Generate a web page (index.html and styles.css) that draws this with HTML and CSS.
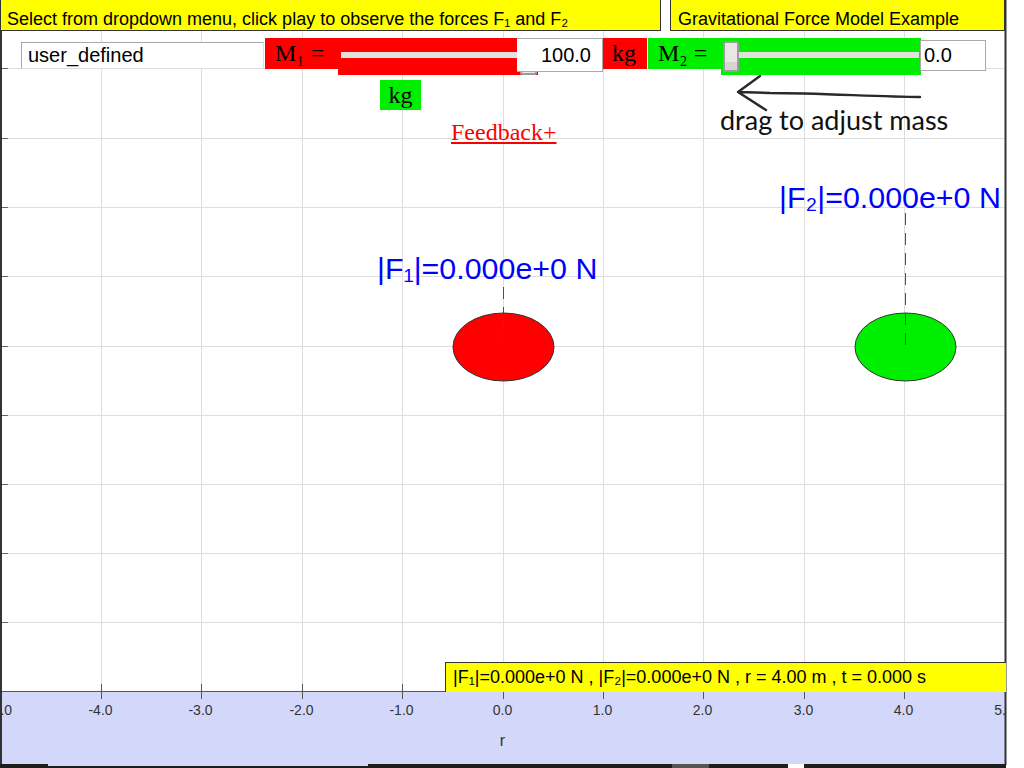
FILE: index.html
```html
<!DOCTYPE html>
<html>
<head>
<meta charset="utf-8">
<link rel="stylesheet" href="styles.css">
</head>
<body>
<div class="stage">
  <svg class="plot" width="1024" height="768" viewBox="0 0 1024 768">
    <defs>
      <clipPath id="plotclip"><rect x="0" y="0" width="1005" height="768"/></clipPath>
    </defs>
    <g class="grid">
      <line x1="101.5" y1="0" x2="101.5" y2="691"/>
      <line x1="201.5" y1="0" x2="201.5" y2="691"/>
      <line x1="302.5" y1="0" x2="302.5" y2="691"/>
      <line x1="402.5" y1="0" x2="402.5" y2="691"/>
      <line x1="503.5" y1="0" x2="503.5" y2="691"/>
      <line x1="603.5" y1="0" x2="603.5" y2="691"/>
      <line x1="703.5" y1="0" x2="703.5" y2="691"/>
      <line x1="804.5" y1="0" x2="804.5" y2="691"/>
      <line x1="904.5" y1="0" x2="904.5" y2="691"/>
      <line x1="1" y1="68.5" x2="1005" y2="68.5"/>
      <line x1="1" y1="138.5" x2="1005" y2="138.5"/>
      <line x1="1" y1="207.5" x2="1005" y2="207.5"/>
      <line x1="1" y1="276.5" x2="1005" y2="276.5"/>
      <line x1="1" y1="346.5" x2="1005" y2="346.5"/>
      <line x1="1" y1="415.5" x2="1005" y2="415.5"/>
      <line x1="1" y1="484.5" x2="1005" y2="484.5"/>
      <line x1="1" y1="553.5" x2="1005" y2="553.5"/>
      <line x1="1" y1="622.5" x2="1005" y2="622.5"/>
    </g>
    <g class="yticks">
      <line x1="1" y1="68.5" x2="8" y2="68.5"/>
      <line x1="1" y1="138.5" x2="8" y2="138.5"/>
      <line x1="1" y1="207.5" x2="8" y2="207.5"/>
      <line x1="1" y1="276.5" x2="8" y2="276.5"/>
      <line x1="1" y1="346.5" x2="8" y2="346.5"/>
      <line x1="1" y1="415.5" x2="8" y2="415.5"/>
      <line x1="1" y1="484.5" x2="8" y2="484.5"/>
      <line x1="1" y1="553.5" x2="8" y2="553.5"/>
      <line x1="1" y1="622.5" x2="8" y2="622.5"/>
    </g>

    <line class="force-line" x1="503.5" y1="287" x2="503.5" y2="347"/>
    <line class="force-line" x1="905.5" y1="213" x2="905.5" y2="347"/>
    <ellipse class="mass1" cx="503.5" cy="347" rx="50.5" ry="34"/>
    <ellipse class="mass2" cx="905.5" cy="347" rx="50.5" ry="34"/>
    <line class="force-line" x1="503.5" y1="320" x2="503.5" y2="347"/>
    <line class="force-line" x1="905.5" y1="313" x2="905.5" y2="347"/>

    <text class="force-label" x="377" y="279">|F₁|=0.000e+0 N</text>
    <text class="force-label" x="779" y="208">|F₂|=0.000e+0 N</text>

    <path class="arrow" d="M920 97 C 880 97, 820 93, 770 93 L 738 92 M760 76 L738 92 L766 110"/>

    <rect class="axis-bg" x="0" y="691" width="1006" height="73"/>
    <line class="axis-line" x1="0" y1="691.5" x2="1006" y2="691.5"/>
    <g class="xticks">
      <line x1="101.5" y1="684" x2="101.5" y2="699"/>
      <line x1="201.5" y1="684" x2="201.5" y2="699"/>
      <line x1="302.5" y1="684" x2="302.5" y2="699"/>
      <line x1="402.5" y1="684" x2="402.5" y2="699"/>
      <line x1="503.5" y1="684" x2="503.5" y2="699"/>
      <line x1="603.5" y1="684" x2="603.5" y2="699"/>
      <line x1="703.5" y1="684" x2="703.5" y2="699"/>
      <line x1="804.5" y1="684" x2="804.5" y2="699"/>
      <line x1="904.5" y1="684" x2="904.5" y2="699"/>
    </g>
    <g class="tick-labels" clip-path="url(#plotclip)">
      <text x="0" y="715">-5.0</text>
      <text x="100.5" y="715">-4.0</text>
      <text x="200.5" y="715">-3.0</text>
      <text x="301.5" y="715">-2.0</text>
      <text x="401.5" y="715">-1.0</text>
      <text x="502.5" y="715">0.0</text>
      <text x="602.5" y="715">1.0</text>
      <text x="702.5" y="715">2.0</text>
      <text x="803.5" y="715">3.0</text>
      <text x="903.5" y="715">4.0</text>
      <text x="1004" y="715">5.0</text>
    </g>
    <text class="axis-name" x="502.5" y="746">r</text>

    <line class="frame" x1="1" y1="0" x2="1" y2="765"/>
    <line class="frame" x1="1005.5" y1="0" x2="1005.5" y2="765"/>
    <rect class="scroll" x="0" y="764" width="1006" height="4"/>
    <rect class="scroll-light" x="48" y="764" width="320" height="2"/>
    <rect class="scroll-gap" x="672" y="764" width="37" height="4"/>
    <rect class="scroll-white" x="788" y="764" width="16" height="4"/>
  </svg>

  <header class="topbar">
    <div class="note">Select from dropdown menu, click play to observe the forces F₁ and F₂</div>
    <div class="gap"></div>
    <div class="title">Gravitational Force Model Example</div>
  </header>

  <div class="controls">
    <div class="select">user_defined</div>
    <div class="label red">M₁ =</div>
    <div class="slider red slider-one">
      <div class="track track-one"></div>
      <div class="thumb thumb-one"></div>
    </div>
    <div class="num num-one">100.0</div>
    <div class="unit red">kg</div>
    <div class="label green">M₂ =</div>
    <div class="slider green">
      <div class="thumb thumb-two"></div>
      <div class="track track-two"></div>
    </div>
    <div class="num num-two">0.0</div>
  </div>

  <div class="kg-green">kg</div>
  <a class="feedback" href="#">Feedback+</a>
  <div class="hint">drag to adjust mass</div>
  <div class="info">|F₁|=0.000e+0 N , |F₂|=0.000e+0 N , r = 4.00 m , t = 0.000 s</div>
</div>
</body>
</html>
```

FILE: styles.css
```css
html, body {
  margin: 0;
  padding: 0;
  background: #ffffff;
}

.stage {
  position: relative;
  width: 1024px;
  height: 768px;
  overflow: hidden;
  font-family: "Liberation Sans", Arial, sans-serif;
  color: #000;
}

.plot {
  position: absolute;
  left: 0;
  top: 0;
}

.grid line {
  stroke: #dedede;
  stroke-width: 1;
}

.yticks line {
  stroke: #666;
  stroke-width: 1;
}

.force-line {
  stroke: #3a3aff;
  stroke-width: 1;
  stroke-dasharray: 12 8;
}

.mass1 {
  fill: #ff0000;
  stroke: #333;
  stroke-width: 1;
}

.mass2 {
  fill: #00ee00;
  stroke: #333;
  stroke-width: 1;
}

.force-label {
  font-family: "Liberation Sans", Arial, sans-serif;
  font-size: 30.4px;
  fill: #0000ff;
}

.arrow {
  fill: none;
  stroke: #2a2a2a;
  stroke-width: 2.4;
  stroke-linecap: round;
  stroke-linejoin: round;
}

.axis-bg {
  fill: #d3d8fb;
}

.axis-line {
  stroke: #555;
  stroke-width: 1;
}

.xticks line {
  stroke: #555;
  stroke-width: 1;
}

.tick-labels text {
  font-family: "Liberation Sans", Arial, sans-serif;
  font-size: 14px;
  fill: #333;
  text-anchor: middle;
}

.axis-name {
  font-family: "Liberation Sans", Arial, sans-serif;
  font-size: 16px;
  fill: #333;
  text-anchor: middle;
}

.frame {
  stroke: #333;
  stroke-width: 2;
}

.scroll { fill: #1e1e1e; }
.scroll-light { fill: #d3d8fb; }
.scroll-gap { fill: #555; }
.scroll-white { fill: #ffffff; }

/* top bar */
.topbar {
  position: relative;
  display: flex;
  height: 31px;
}

.note {
  box-sizing: border-box;
  width: 661px;
  height: 31px;
  background: #ffff00;
  border-left: 1px solid #333;
  border-right: 1px solid #333;
  border-bottom: 1px solid #333;
  padding: 9px 0 0 6px;
  font-size: 18px;
  line-height: 20px;
  white-space: nowrap;
}

.gap {
  width: 9px;
  height: 31px;
  background: #fff;
}

.title {
  box-sizing: border-box;
  width: 335px;
  height: 31px;
  background: #ffff00;
  border-left: 1px solid #333;
  border-right: 1px solid #333;
  border-bottom: 1px solid #333;
  padding: 9px 0 0 7px;
  font-size: 18px;
  line-height: 20px;
  white-space: nowrap;
}

/* controls */
.controls {
  position: relative;
  display: flex;
  align-items: flex-start;
  margin-top: 7px;
  height: 37px;
}

.select {
  box-sizing: border-box;
  margin: 4px 0 0 21px;
  width: 243px;
  height: 27px;
  background: #fff;
  border: 1px solid #a9a9a9;
  border-right-color: #ddd;
  border-bottom-color: #ddd;
  padding-left: 6px;
  font-size: 20px;
  line-height: 25px;
}

.red { background: #ff0000; }
.green { background: #00ee00; }

.label {
  box-sizing: border-box;
  margin-left: 1px;
  width: 73px;
  height: 31px;
  padding-left: 10px;
  font-family: "Liberation Serif", "Times New Roman", serif;
  font-size: 24px;
  line-height: 31px;
  white-space: nowrap;
}

.unit {
  box-sizing: border-box;
  width: 44px;
  height: 31px;
  padding-left: 9px;
  font-family: "Liberation Serif", "Times New Roman", serif;
  font-size: 24px;
  line-height: 31px;
}

.slider {
  position: relative;
  width: 200px;
  height: 37px;
}

.slider-one {
  margin-right: -21px;
}

.track {
  height: 6px;
  background: #e4e1dd;
}

.track-one {
  margin: 14px 0 0 3px;
  width: 178px;
}

.track-two {
  position: absolute;
  left: 18px;
  top: 14px;
  width: 180px;
}

.thumb {
  position: absolute;
  box-sizing: border-box;
  background: #e9e6e3;
  border: 2px solid #9c9c9c;
  border-radius: 2px;
}

.thumb-one {
  left: 182px;
  top: 3px;
  width: 17px;
  height: 34px;
}

.thumb-two {
  left: 2px;
  top: 3px;
  width: 16px;
  height: 31px;
  background: linear-gradient(#e9e6e3 70%, #d6d3d0 70%);
}

.num {
  position: relative;
  box-sizing: border-box;
  background: #fff;
  font-size: 20px;
  white-space: nowrap;
}

.num-one {
  width: 86px;
  height: 34px;
  border: 1px solid #aaa;
  border-left: none;
  text-align: right;
  padding-right: 11px;
  line-height: 32px;
}

.num-two {
  margin: 2px 0 0 -1px;
  width: 66px;
  height: 31px;
  border: 1px solid #aaa;
  padding-left: 3px;
  line-height: 29px;
}

/* canvas overlays */
.kg-green {
  position: absolute;
  left: 380px;
  top: 80px;
  width: 41px;
  height: 30px;
  background: #00ee00;
  text-align: center;
  font-family: "Liberation Serif", "Times New Roman", serif;
  font-size: 24px;
  line-height: 30px;
}

.feedback {
  position: absolute;
  left: 451px;
  top: 120px;
  font-family: "Liberation Serif", "Times New Roman", serif;
  font-size: 24px;
  line-height: 24px;
  color: #ff0000;
  text-decoration: underline;
}

.hint {
  position: absolute;
  left: 720px;
  top: 104px;
  font-family: Lato, "Open Sans", sans-serif;
  font-size: 27px;
  line-height: 32px;
  color: #111;
  white-space: nowrap;
}

.info {
  position: absolute;
  box-sizing: border-box;
  left: 445px;
  top: 662px;
  width: 561px;
  height: 30px;
  background: #ffff00;
  border-top: 1px solid #333;
  border-left: 1px solid #333;
  padding-left: 7px;
  font-size: 18px;
  line-height: 28px;
  white-space: nowrap;
}
```
